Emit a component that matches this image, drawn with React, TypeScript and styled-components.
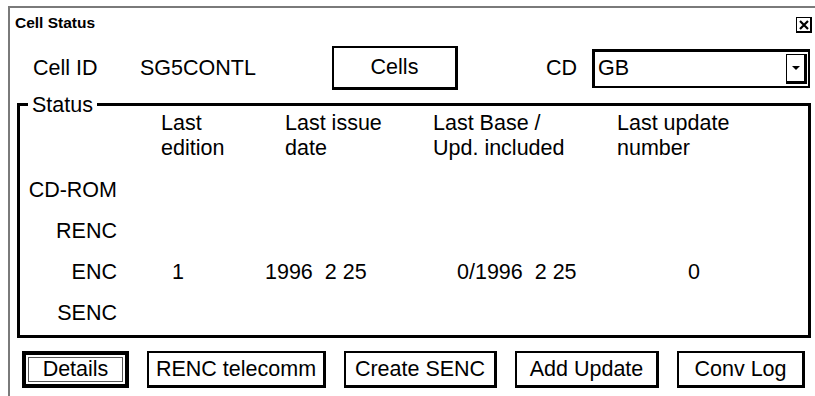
import React from 'react';
import styled, { createGlobalStyle } from 'styled-components';

const Global = createGlobalStyle`
  html, body { margin: 0; padding: 0; background: #fff; }
  body {
    font-family: "Liberation Sans", Arial, sans-serif;
    color: #000;
    -webkit-font-smoothing: none;
  }
  #root { width: 815px; height: 396px; overflow: hidden; }
`;

const Window = styled.div`
  margin: 6px 0 0 8px;
  height: 390px;
  border-left: 2px solid #7a7a7a;
  border-top: 2px solid #7a7a7a;
  display: flex;
  flex-direction: column;
  font-size: 21.5px;
  line-height: 25px;
`;

const TitleBar = styled.div`
  height: 38px;
  box-sizing: border-box;
  display: flex;
  justify-content: space-between;
  align-items: flex-start;
  padding: 6px 3px 0 5px;
`;

const Title = styled.div`
  font-weight: bold;
  font-size: 15.5px;
  line-height: 18px;
`;

const CloseBox = styled.div`
  width: 16px;
  height: 16px;
  margin-top: 3px;
  box-sizing: border-box;
  border: 1px solid #000;
  border-right-width: 2px;
  border-bottom-width: 2px;
  display: flex;
  align-items: center;
  justify-content: center;
`;

const TopRow = styled.div`
  height: 44px;
  display: flex;
  align-items: center;
`;

const Field = styled.div<{ $w: number; $ml?: number; $right?: boolean; $pr?: number }>`
  width: ${(p) => p.$w}px;
  margin-left: ${(p) => p.$ml ?? 0}px;
  text-align: ${(p) => (p.$right ? 'right' : 'left')};
  padding-right: ${(p) => p.$pr ?? 0}px;
  box-sizing: border-box;
  white-space: pre;
`;

const Button = styled.div<{ $w: number; $h?: number; $default?: boolean }>`
  width: ${(p) => p.$w}px;
  height: ${(p) => p.$h ?? 37}px;
  box-sizing: border-box;
  background: #fff;
  display: flex;
  align-items: center;
  justify-content: center;
  white-space: pre;
  border: ${(p) => (p.$default ? '4px' : '2px')} solid #000;
  border-right-width: ${(p) => (p.$default ? '4px' : '3px')};
  border-bottom-width: ${(p) => (p.$default ? '4px' : '3px')};
  box-shadow: ${(p) => (p.$default ? 'inset 0 0 0 2px #fff, inset 0 0 0 3px #555' : 'none')};
`;

const Select = styled.div`
  width: 218px;
  height: 39px;
  box-sizing: border-box;
  border: 3px solid #000;
  border-right-width: 2px;
  border-bottom-width: 2px;
  display: flex;
  align-items: center;
  padding: 0 1px 0 3px;
`;

const SelectValue = styled.div`
  flex: 1;
`;

const DropButton = styled.div`
  width: 21px;
  height: 30px;
  box-sizing: border-box;
  border: 1px solid #000;
  border-right-width: 3px;
  border-bottom-width: 3px;
  display: flex;
  align-items: center;
  justify-content: center;
`;

const Arrow = styled.div`
  width: 0;
  height: 0;
  border-left: 4px solid transparent;
  border-right: 4px solid transparent;
  border-top: 4px solid #000;
`;

const Group = styled.div`
  position: relative;
  margin: 13px 0 0 7px;
  width: 794px;
  height: 235px;
  box-sizing: border-box;
  border: 3px solid #000;
  padding-top: 5px;
`;

const Legend = styled.div`
  position: absolute;
  top: -13px;
  left: 8px;
  padding: 0 4px;
  background: #fff;
`;

const Grid = styled.div`
  display: grid;
  grid-template-columns: 141px 124px 148px 184px 1fr;
  grid-template-rows: 50px 8.5px repeat(4, 41px);
`;

const HeadCell = styled.div<{ $col: number }>`
  grid-column: ${(p) => p.$col};
  grid-row: 1;
`;

const RowLabel = styled.div<{ $row: number }>`
  grid-column: 1;
  grid-row: ${(p) => p.$row};
  display: flex;
  align-items: center;
  justify-content: flex-end;
  padding-right: 44px;
`;

const Value = styled.div<{ $row: number; $col: number; $shift: number }>`
  grid-column: ${(p) => p.$col};
  grid-row: ${(p) => p.$row};
  display: flex;
  align-items: center;
  margin-left: ${(p) => p.$shift}px;
  white-space: pre;
`;

const ButtonRow = styled.div`
  display: flex;
  gap: 18px;
  margin: 13px 0 0 12px;
`;

export default function App() {
  const rows = ['CD-ROM', 'RENC', 'ENC', 'SENC'];
  return (
    <>
      <Global />
      <Window>
        <TitleBar>
          <Title>Cell Status</Title>
          <CloseBox>
            <svg width="10" height="10" viewBox="0 0 10 10">
              <path d="M1 1 L9 9 M9 1 L1 9" stroke="#000" strokeWidth="2.2" />
            </svg>
          </CloseBox>
        </TitleBar>
        <TopRow>
          <Field $w={107} $ml={23}>Cell ID</Field>
          <Field $w={192}>SG5CONTL</Field>
          <Button $w={126} $h={44}>Cells</Button>
          <Field $w={134} $right $pr={15}>CD</Field>
          <Select>
            <SelectValue>GB</SelectValue>
            <DropButton>
              <Arrow />
            </DropButton>
          </Select>
        </TopRow>
        <Group>
          <Legend>Status</Legend>
          <Grid>
            <HeadCell $col={2}>Last<br />edition</HeadCell>
            <HeadCell $col={3}>Last issue<br />date</HeadCell>
            <HeadCell $col={4}>Last Base /<br />Upd. included</HeadCell>
            <HeadCell $col={5}>Last update<br />number</HeadCell>
            {rows.map((r, i) => (
              <RowLabel key={r} $row={i + 3}>{r}</RowLabel>
            ))}
            <Value $row={5} $col={2} $shift={11}>1</Value>
            <Value $row={5} $col={3} $shift={-20}>{'1996  2 25'}</Value>
            <Value $row={5} $col={4} $shift={24}>{'0/1996  2 25'}</Value>
            <Value $row={5} $col={5} $shift={71}>0</Value>
          </Grid>
        </Group>
        <ButtonRow>
          <Button $w={107} $default>Details</Button>
          <Button $w={179}>RENC telecomm</Button>
          <Button $w={153}>Create SENC</Button>
          <Button $w={144}>Add Update</Button>
          <Button $w={128}>Conv Log</Button>
        </ButtonRow>
      </Window>
    </>
  );
}
